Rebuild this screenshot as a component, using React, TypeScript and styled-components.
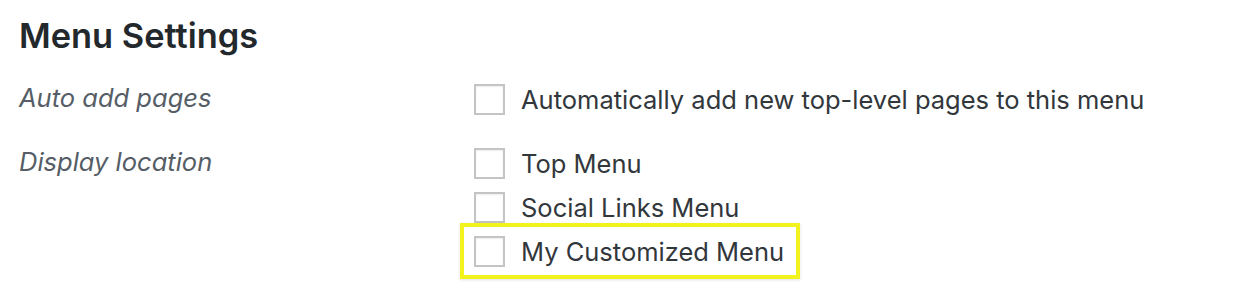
import React from 'react';
import styled, { createGlobalStyle } from 'styled-components';

const GlobalStyle = createGlobalStyle`
  html, body {
    margin: 0;
    padding: 0;
    background: #fff;
  }
  body {
    font-family: Inter, "Liberation Sans", Arial, sans-serif;
    color: #32373c;
    -webkit-font-smoothing: antialiased;
  }
`;

const Page = styled.div`
  padding: 16px 0 0 19px;
`;

const Title = styled.h2`
  margin: 0 0 28px;
  font-size: 34.4px;
  font-weight: 600;
  line-height: 40px;
  color: #23282d;
`;

const SettingRow = styled.div`
  display: grid;
  grid-template-columns: 455px 1fr;
  margin-bottom: 33px;
`;

const Label = styled.div`
  font-size: 25.5px;
  font-style: italic;
  color: #555d66;
  line-height: 28px;
`;

const OptionList = styled.div`
  display: flex;
  flex-direction: column;
  gap: 13px;
`;

const Option = styled.label<{ $highlight?: boolean }>`
  display: flex;
  align-items: center;
  gap: 16px;
  font-size: 25.5px;
  line-height: 31px;
  color: #32373c;
  width: max-content;
  ${(p) =>
    p.$highlight &&
    `
    margin: -13px 0 0 -14px;
    padding: 9px 12px 8px 10px;
    border: 4px solid #f2f21c;
    box-shadow: 0 1px 3px rgba(0, 0, 0, 0.12);
  `}
`;

const Box = styled.span`
  width: 27px;
  height: 27px;
  border: 2px solid #c4c4c4;
  background: #fff;
  box-shadow: inset 0 1px 2px rgba(0, 0, 0, 0.07);
  flex-shrink: 0;
`;

export default function App() {
  return (
    <>
      <GlobalStyle />
      <Page>
        <Title>Menu Settings</Title>
        <SettingRow>
          <Label>Auto add pages</Label>
          <OptionList>
            <Option>
              <Box />
              Automatically add new top-level pages to this menu
            </Option>
          </OptionList>
        </SettingRow>
        <SettingRow>
          <Label>Display location</Label>
          <OptionList>
            <Option>
              <Box />
              Top Menu
            </Option>
            <Option>
              <Box />
              Social Links Menu
            </Option>
            <Option $highlight>
              <Box />
              My Customized Menu
            </Option>
          </OptionList>
        </SettingRow>
      </Page>
    </>
  );
}
